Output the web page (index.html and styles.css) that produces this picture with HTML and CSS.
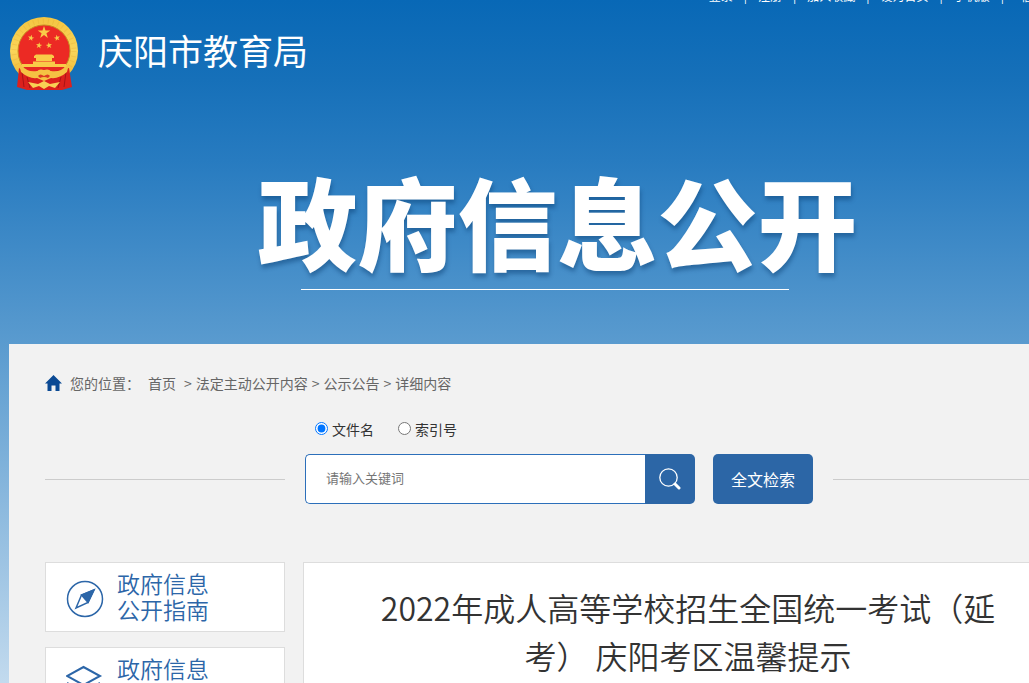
FILE: index.html
```
<!DOCTYPE html>
<html lang="zh-CN">

<head>
    <meta charset="UTF-8">
    <title>庆阳市教育局 政府信息公开</title>
    <link rel="stylesheet" href="styles.css">
</head>

<body>
    <nav class="top-nav">
        <a href="#">登录</a><span>|</span>
        <a href="#">注册</a><span>|</span>
        <a href="#">加入收藏</a><span>|</span>
        <a href="#">设为首页</a><span>|</span>
        <a href="#">手机版</a><span>|</span>
        <a class="last" href="#">信息</a>
    </nav>

    <header class="header">
        <a class="logo" href="#">
            <svg class="emblem" viewBox="0 0 70 74" aria-hidden="true">
                <defs>
                    <linearGradient id="gold" x1="0" y1="0" x2="0" y2="1">
                        <stop offset="0" stop-color="#f4c541" />
                        <stop offset="0.5" stop-color="#fad55a" />
                        <stop offset="1" stop-color="#eeb02c" />
                    </linearGradient>
                    <path id="star" d="M0-6L1.4-1.9H5.7L2.2.7 3.5 4.9 0 2.3-3.5 4.9-2.2.7-5.7-1.9H-1.4Z" />
                </defs>
                <circle cx="35" cy="34" r="34" fill="url(#gold)" />
                <circle cx="35" cy="34" r="30" fill="none" stroke="#dfa02a" stroke-width="5" stroke-dasharray="1 4" opacity="0.25" />
                <circle cx="35" cy="34" r="26" fill="#ec2a24" stroke="#c98b22" />
                <g fill="#f9cb48">
                    <use href="#star" transform="translate(35 15.5) scale(1.1)" />
                    <use href="#star" transform="translate(22 21) scale(.55) rotate(12)" />
                    <use href="#star" transform="translate(48 21) scale(.55) rotate(-12)" />
                    <use href="#star" transform="translate(30 28.5) scale(.55) rotate(8)" />
                    <use href="#star" transform="translate(40 28.5) scale(.55) rotate(-8)" />
                    <path d="M25 39L27 37.500H43L45 39V41H25ZM27 41H43V44H27ZM24 44.500H46V47H57L59 50H11L13 47H24Z" />
                </g>
                <path d="M10 51L20 58 60 51 63 70 53 73H18L8 70Z" fill="#dc211d" />
                <path d="M13 55L15 70M18 60L21 71M57 55L55 70M52 60L49 71" stroke="#a91416" fill="none" />
                <path d="M10 47Q19 56 28 54Q31 51 35 53Q39 51 42 54Q51 56 60 47L58 55Q50 62 42 61L35 64 28 61Q20 62 12 55Z" fill="#f5c243" />
                <path d="M15 51Q22 54 28 54Q31 51 35 53Q39 51 42 54Q48 54 55 51V50H15Z" fill="#e52822" />
                <path d="M29 59Q31 56 35 59Q39 56 41 59L39 61Q35 59 31 61Z" fill="#dc3a22" />
                <path d="M19 65L29 67 35 64 41 67 51 65 46 71 40 69 35 72 30 69 24 71Z" fill="#f8d154" />
            </svg>
            <span>庆阳市教育局</span>
        </a>
        <h1 class="banner">政府信息公开</h1>
    </header>

    <main class="main">
        <div class="location">
            <svg class="home" viewBox="0 0 17 16" aria-hidden="true">
                <path d="M8.500 0L17 8.500H14.500V16H10.500V10.500H6.500V16H2.500V8.500H0Z" fill="#0b4a94" />
            </svg>
            <span class="here">您的位置：</span>
            <a class="first" href="#">首页</a>
            <span>&gt;</span>
            <a href="#">法定主动公开内容</a>
            <span>&gt;</span>
            <a href="#">公示公告</a>
            <span>&gt;</span>
            <a href="#">详细内容</a>
        </div>

        <form class="search">
            <div class="types">
                <label><input type="radio" name="type" checked>文件名</label>
                <label><input type="radio" name="type">索引号</label>
            </div>
            <div class="search-row">
                <div class="search-box">
                    <input type="text" placeholder="请输入关键词" aria-label="请输入关键词">
                    <button class="go" type="button" aria-label="搜索">
                        <svg viewBox="0 0 22 22" fill="none" stroke="#fff" aria-hidden="true">
                            <circle cx="9.500" cy="9.500" r="8.700" stroke-width="1.300" />
                            <path d="M16 16L20 20" stroke-width="3" stroke-linecap="round" />
                        </svg>
                    </button>
                </div>
                <button class="full" type="button">全文检索</button>
            </div>
        </form>

        <div class="columns">
            <aside class="side">
                <a href="#">
                    <svg viewBox="0 0 38 38" fill="none" stroke="#2c66a8" stroke-width="1.500" aria-hidden="true">
                        <circle cx="19" cy="19" r="17.500" />
                        <path d="M28 10L15.500 15 10 28 22 22.500Z" />
                        <path d="M28 10L15.500 15 22 22.500Z" fill="#2c66a8" />
                    </svg>
                    <span>政府信息<br>公开指南</span>
                </a>
                <a href="#">
                    <svg viewBox="0 0 38 38" fill="none" stroke="#2c66a8" stroke-width="2" aria-hidden="true">
                        <path d="M17.500 2L34 11 17.500 20 1 11Z" />
                        <path d="M1 18L17.500 27 34 18M1 25L17.500 34 34 25" />
                    </svg>
                    <span>政府信息<br>公开制度</span>
                </a>
            </aside>
            <article class="article">
                <h2>2022年成人高等学校招生全国统一考试（延考） 庆阳考区温馨提示</h2>
            </article>
        </div>
    </main>
</body>

</html>
```
FILE: styles.css
```
* {
    box-sizing: border-box;
}

body {
    margin: 0;
    height: 100vh;
    overflow: hidden;
    background: linear-gradient(#0868b6 0, #1670b9 80px, #277bc0 160px, #5a9bcf 344px, #c2daee 683px);
    font-family: "Noto Sans CJK SC", sans-serif;
    font-size: 14px;
    color: #333;
}

a {
    color: inherit;
    text-decoration: none;
}

.top-nav {
    display: flex;
    justify-content: flex-end;
    align-items: flex-end;
    gap: 11px;
    height: 4px;
    margin-right: -16px;
    overflow: hidden;
    font-size: 12px;
    line-height: 16px;
    color: #fff;
    white-space: nowrap;
}

.top-nav .last {
    padding-left: 6px;
}

.header {
    height: 340px;
    padding-top: 1px;
}

.logo {
    display: flex;
    align-items: center;
    gap: 19px;
    padding: 12px 9px 0;
    font-size: 35px;
    line-height: 64px;
    color: #fff;
}

.logo span {
    padding-bottom: 8px;
}

.emblem {
    width: 70px;
    height: 74px;
}

/* the banner sits a little right of the middle */
.banner {
    width: 602px;
    margin: 60px 0 0 calc(50% - 257px);
    font-size: 100px;
    line-height: 138px;
    font-weight: 900;
    color: #fff;
    text-shadow: 1px 4px 4px rgba(0, 50, 100, 0.4);
    white-space: nowrap;
}

.banner::after {
    content: "";
    display: block;
    width: 488px;
    height: 1px;
    margin-left: 43px;
    background: #fff;
}

.main {
    min-height: 100vh;
    margin-left: 9px;
    padding: 27px 0 0 36px;
    background: #f2f2f2;
}

.location {
    display: flex;
    align-items: center;
    gap: 4px;
    line-height: 24px;
    color: #666;
}

.home {
    width: 17px;
    height: 16px;
    margin-right: 4px;
}

.here,
.first {
    margin-right: 4px;
}

.types {
    display: flex;
    gap: 24px;
    margin-top: 22px;
    padding-left: 270px;
    line-height: 24px;
}

.types label {
    display: flex;
    align-items: center;
}

.types input {
    width: 13px;
    height: 13px;
    margin: 0 4px 2px 0;
}

.search-row {
    display: flex;
    align-items: center;
    margin-top: 13px;
}

.search-row::before,
.search-row::after {
    content: "";
    height: 1px;
    background: #ccc;
}

.search-row::before {
    width: 240px;
    margin-right: 20px;
}

.search-row::after {
    flex: 1;
    margin-left: 20px;
}

.search-box {
    display: flex;
    width: 390px;
    height: 50px;
    margin-right: 18px;
}

.search-box input {
    flex: 1;
    min-width: 0;
    padding: 0 20px 4px;
    border: 1px solid #2c6fba;
    border-right: 0;
    border-radius: 5px 0 0 5px;
    font-family: inherit;
    font-size: 13px;
}

.search-box input::placeholder {
    color: #757575;
}

.go,
.full {
    border: 0;
    background: #2c66a6;
    color: #fff;
    font-family: inherit;
}

.go {
    width: 50px;
    padding: 4px 0 0;
    border-radius: 0 5px 5px 0;
}

.go svg {
    width: 22px;
    height: 22px;
}

.full {
    width: 100px;
    height: 50px;
    padding: 0;
    border-radius: 5px;
    font-size: 16px;
}

.columns {
    display: flex;
    gap: 18px;
    margin-top: 58px;
}

.side {
    width: 240px;
}

.side a {
    display: flex;
    align-items: center;
    gap: 13px;
    height: 70px;
    margin-bottom: 15px;
    padding: 0 20px;
    border: 1px solid #ddd;
    background: #fff;
    font-size: 23px;
    line-height: 26px;
    font-weight: 350;
    color: #2c66a8;
}

.side span {
    padding-bottom: 2px;
}

.side svg {
    width: 38px;
    height: 38px;
    margin-top: 4px;
}

.article {
    flex: 1;
    min-height: 300px;
    padding: 20px 18px 0 61px;
    border: 1px solid #ddd;
    border-right: 0;
    background: #fff;
    text-align: center;
}

.article h2 {
    margin: 0;
    font-size: 32px;
    line-height: 48px;
    font-weight: 350;
}
```
